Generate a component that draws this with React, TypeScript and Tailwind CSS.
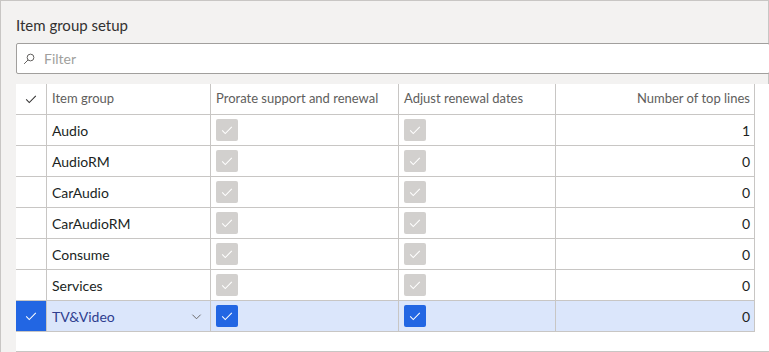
import React from "react";

const rows = [
  { name: "Audio", lines: 1 },
  { name: "AudioRM", lines: 0 },
  { name: "CarAudio", lines: 0 },
  { name: "CarAudioRM", lines: 0 },
  { name: "Consume", lines: 0 },
  { name: "Services", lines: 0 },
  { name: "TV&Video", lines: 0, selected: true },
];

const Check = ({ className = "" }: { className?: string }) => (
  <svg viewBox="0 0 16 16" className={className} fill="none" stroke="currentColor" strokeWidth="1.2">
    <path d="M2.5 8.5l3.5 3.5 7.5-7.5" />
  </svg>
);

// grey = read-only checkbox, blue = editable row
const Box = ({ active }: { active?: boolean }) => (
  <div
    className={
      "w-[22px] h-[22px] rounded-[2px] flex items-center justify-center text-white " +
      (active ? "bg-[#2266e3]" : "bg-[#d2d0ce]")
    }
  >
    <Check className="w-[14px] h-[14px]" />
  </div>
);

const cols = "grid grid-cols-[31px_164px_188px_157px_199px] w-[739px]";

export default function App() {
  return (
    <div
      className="w-[769px] h-[352px] bg-[#f3f2f1] border-t border-l border-r border-[#c8c6c4] flex flex-col"
      style={{ fontFamily: '"Segoe UI", Lato, sans-serif' }}
    >
      <div className="pl-[15px] pt-[13px] h-[42px] text-[15px] text-[#323130]">Item group setup</div>

      <div className="ml-[15px] mr-[-2px] h-[31px] bg-white border border-[#a19f9d] rounded-[2px] flex items-center pl-[6px] gap-[9px]">
        <svg viewBox="0 0 16 16" className="w-[12px] h-[12px] text-[#605e5c]" fill="none" stroke="currentColor" strokeWidth="1.3">
          <circle cx="10" cy="6" r="4.5" />
          <path d="M6.8 9.2L1.5 14.5" />
        </svg>
        <span className="text-[14px] text-[#a19f9d]">Filter</span>
      </div>

      <div className="ml-[15px] mr-[-2px] mt-[10px] flex-1 bg-white border-b border-[#c8c6c4]">
        <div className={cols + " h-[31px] border-b border-r border-[#c8c6c4] text-[13px] text-[#605e5c]"}>
          <div className="flex items-center justify-center border-r border-[#c8c6c4] text-[#323130]">
            <Check className="w-[14px] h-[14px]" />
          </div>
          <div className="flex items-center px-[5px] border-r border-[#c8c6c4]">Item group</div>
          <div className="flex items-center px-[5px] border-r border-[#c8c6c4]">Prorate support and renewal</div>
          <div className="flex items-center px-[5px] border-r border-[#c8c6c4]">Adjust renewal dates</div>
          <div className="flex items-center justify-end px-[5px]">Number of top lines</div>
        </div>

        {rows.map((r) => (
          <div
            key={r.name}
            className={
              cols +
              " h-[31px] border-b border-r border-[#c8c6c4] text-[14px] " +
              (r.selected ? "bg-[#dbe6fb] text-[#2f3e8f]" : "text-[#201f1e]")
            }
          >
            <div
              className={
                "flex items-center justify-center border-r border-[#c8c6c4] text-white " +
                (r.selected ? "bg-[#2266e3]" : "")
              }
            >
              {r.selected && <Check className="w-[14px] h-[14px]" />}
            </div>
            <div className="flex items-center justify-between px-[5px] border-r border-[#c8c6c4]">
              <span>{r.name}</span>
              {r.selected && (
                <svg viewBox="0 0 12 12" className="w-[11px] h-[11px] mr-[3px] text-[#605e5c]" fill="none" stroke="currentColor" strokeWidth="1">
                  <path d="M1.5 4l4.5 4.5L10.5 4" />
                </svg>
              )}
            </div>
            <div className="flex items-center px-[5px] border-r border-[#c8c6c4]">
              <Box active={r.selected} />
            </div>
            <div className="flex items-center px-[5px] border-r border-[#c8c6c4]">
              <Box active={r.selected} />
            </div>
            <div className="flex items-center justify-end px-[5px] text-[#201f1e]">{r.lines}</div>
          </div>
        ))}
      </div>
    </div>
  );
}
